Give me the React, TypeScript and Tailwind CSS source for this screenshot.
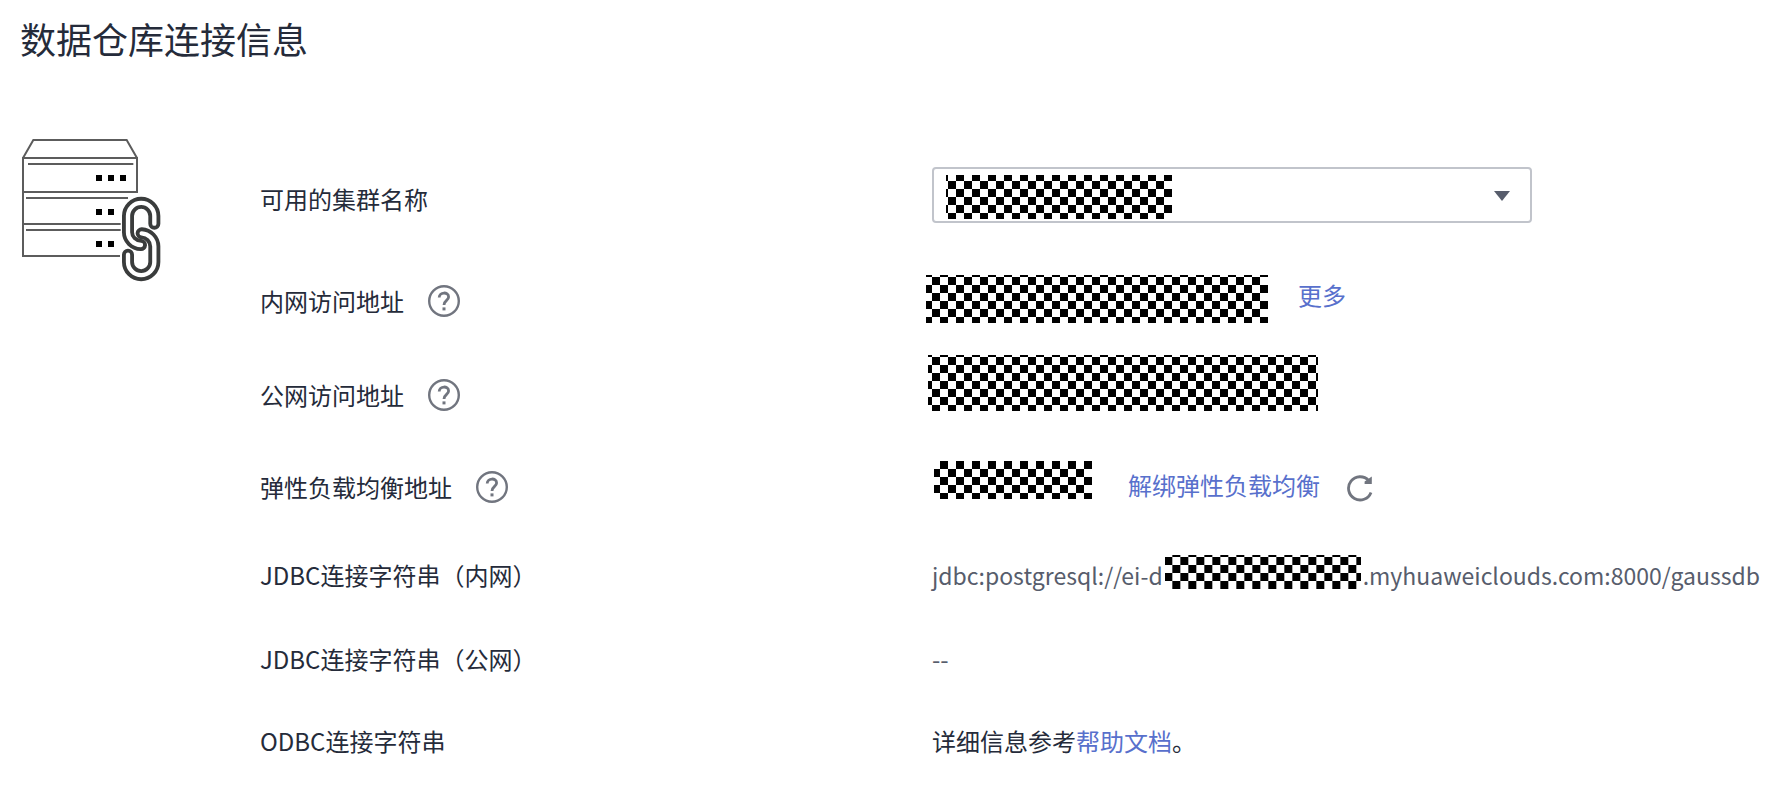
import type { ReactNode } from "react";
import clsx from "clsx";

function ServerLinkIcon() {
  const upper = "M433 296 V273 A39 39 0 0 0 354 273 V322 A41 38 0 0 0 393 360";
  const lower = "M395 325 A40 40 0 0 1 433 364 V411 A39 39 0 0 1 354 411 V389";
  return (
    <svg viewBox="36 39 420 432" className="h-36 w-[140px]" fill="none" aria-hidden="true">
      <g stroke="#5c5c5c" strokeWidth="6">
        <path d="M39 99 L70 45 H350 L381 99 M381 202 V99 H39 V393 H330" />
        <path d="M54 117 H370 M39 201 H384 M48 219 H354 M39 297 H332 M48 315 H332" />
      </g>
      <path
        d="M258 150h18v18h-18z M294 150h18v18h-18z M330 150h18v18h-18z M258 252h18v18h-18z M294 252h18v18h-18z M258 348h18v18h-18z M294 348h18v18h-18z"
        fill="#000"
      />
      <g strokeLinecap="round">
        <path d={upper} stroke="#3a3c3c" strokeWidth="36" />
        <path d={upper} stroke="#fff" strokeWidth="13" />
        <path d={lower} stroke="#3a3c3c" strokeWidth="36" />
        <path d={lower} stroke="#fff" strokeWidth="13" />
      </g>
    </svg>
  );
}

function HelpButton({ label }: { label: string }) {
  return (
    <button type="button" aria-label={label} className="text-[#71757f]">
      <svg viewBox="0 0 32 32" className="h-8 w-8" fill="none" stroke="currentColor" aria-hidden="true">
        <circle cx="16" cy="16" r="14.8" strokeWidth="2.4" />
        <path d="M11.2 12.6 C11.2 6.6 20.6 6.6 20.6 12 C20.6 15.4 16 15.4 16 20" strokeWidth="2.8" />
        <path d="M16 22.4 V25.4" strokeWidth="3" />
      </svg>
    </button>
  );
}

function RefreshIcon() {
  return (
    <svg viewBox="0 0 28 28" className="h-7 w-7" fill="none" aria-hidden="true">
      <path d="M25 18.4 A11.6 11.6 0 1 1 22.6 6.4" stroke="currentColor" strokeWidth="2.8" />
      <path d="M25.8 2.4 V10 H18.6 V7.6 Z" fill="currentColor" />
    </svg>
  );
}

// Checkered block that hides a private value
function Masked({ className }: { className: string }) {
  return (
    <span
      className={clsx(
        "block shrink-0 bg-[repeating-conic-gradient(#000_0_25%,#fff_0_50%)] bg-[length:16px_16px] bg-[position:4px_13px] bg-fixed",
        className
      )}
    />
  );
}

function Row({ label, help, className, children }: { label: ReactNode; help?: string; className?: string; children: ReactNode }) {
  return (
    <div className={clsx("grid h-14 grid-cols-[minmax(0,4fr)_minmax(0,5fr)] items-center", className)}>
      <dt className="flex items-center gap-6 pb-0.5">
        {label}
        {help && <HelpButton label={help} />}
      </dt>
      <dd className="flex h-14 items-center whitespace-nowrap">{children}</dd>
    </div>
  );
}

export default function App() {
  return (
    <main className="bg-white pt-3.5 pr-3 pb-4 pl-5 font-['Noto_Sans_CJK_SC',sans-serif] text-2xl text-[#252b3a]">
      <h1 className="text-4xl leading-[48px]">数据仓库连接信息</h1>

      <div className="mt-[76px] flex items-start">
        <div className="w-60 shrink-0 pl-0.5">
          <ServerLinkIcon />
        </div>

        <dl className="min-w-0 flex-1 pt-[34px]">
          <Row label={<label htmlFor="cluster">可用的集群名称</label>}>
            <div className="relative mb-2.5 w-5/7">
              <select
                id="cluster"
                className="block h-14 w-full appearance-none rounded border-2 border-[#c1c4cb] bg-white px-4"
              />
              <Masked className="pointer-events-none absolute top-2 left-3.5 h-11 w-[226px]" />
              <svg
                viewBox="0 0 16 10"
                className="pointer-events-none absolute top-6 right-[22px] h-2.5 w-4 fill-[#575d6c]"
                aria-hidden="true"
              >
                <path d="M0 0 H16 L8 10 Z" />
              </svg>
            </div>
          </Row>

          <Row label="内网访问地址" help="内网访问地址说明" className="mt-[46px]">
            <Masked className="-ml-1.5 mb-1.5 h-12 w-[342px]" />
            <a href="#more" className="mb-3.5 ml-[30px] text-[#5870cc]">
              更多
            </a>
          </Row>

          <Row label="公网访问地址" help="公网访问地址说明" className="mt-[38px]">
            <Masked className="-ml-1 mb-[26px] h-14 w-[390px]" />
          </Row>

          <Row label="弹性负载均衡地址" help="弹性负载均衡地址说明" className="mt-9">
            <Masked className="mb-4 ml-0.5 h-[38px] w-[158px]" />
            <button type="button" className="mb-1.5 ml-9 text-[#5870cc]">
              解绑弹性负载均衡
            </button>
            <button type="button" aria-label="刷新" className="ml-[26px] text-[#71757f]">
              <RefreshIcon />
            </button>
          </Row>

          <Row label="JDBC连接字符串（内网）" className="mt-8">
            <span className="pb-0.5 text-[23px] text-[#575d6c]">jdbc:postgresql://ei-d</span>
            <Masked className="mx-0.5 mb-2 h-[34px] w-[196px]" />
            <span className="pb-0.5 text-[23px] text-[#575d6c]">.myhuaweiclouds.com:8000/gaussdb</span>
          </Row>

          <Row label="JDBC连接字符串（公网）" className="mt-7">
            <span className="pb-0.5 text-[#575d6c]">--</span>
          </Row>

          <Row label="ODBC连接字符串" className="mt-[26px]">
            <span className="pb-0.5">
              详细信息参考
              <a href="#help" className="text-[#5870cc]">
                帮助文档
              </a>
              。
            </span>
          </Row>
        </dl>
      </div>
    </main>
  );
}
